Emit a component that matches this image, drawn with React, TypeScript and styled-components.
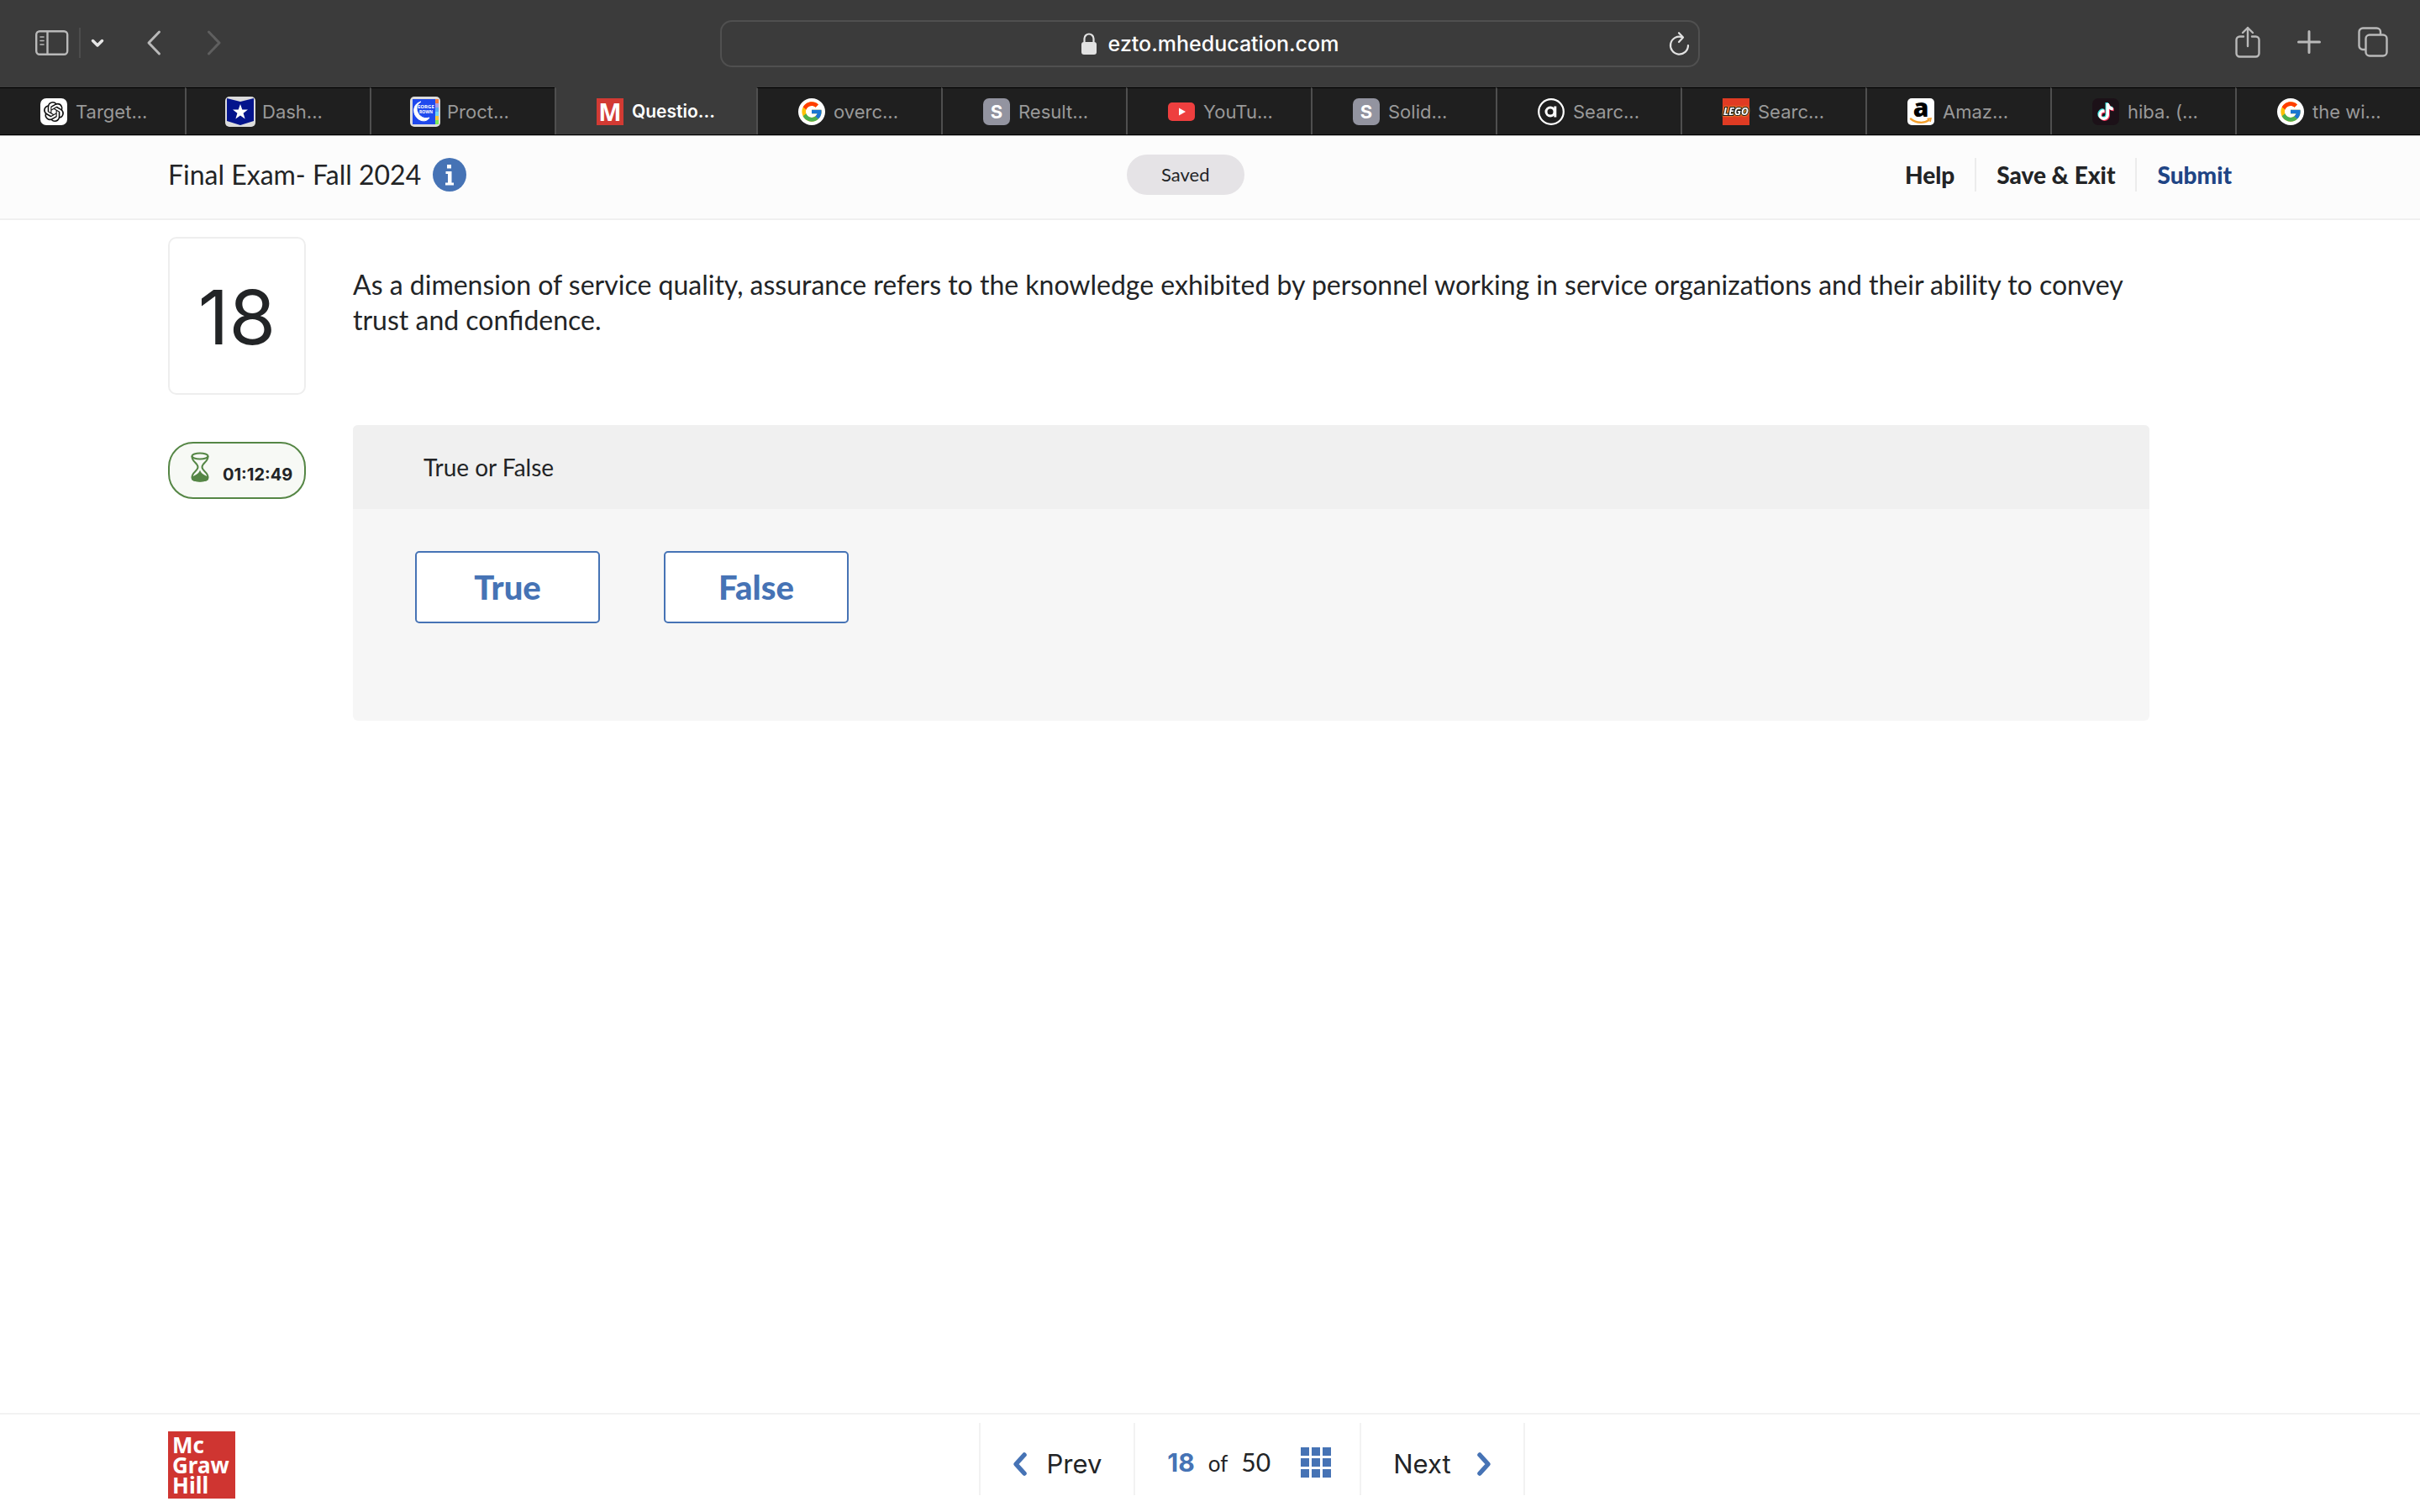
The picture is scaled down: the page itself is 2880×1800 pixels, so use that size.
import React from "react";
import styled, { createGlobalStyle } from "styled-components";
import { FcGoogle } from "react-icons/fc";
import { SiOpenai } from "react-icons/si";
import { FaTiktok } from "react-icons/fa6";

const ui = `Inter, "Liberation Sans", sans-serif`;
const body = `Lato, "Open Sans", sans-serif`;
const humanist = `"Noto Sans", "Open Sans", sans-serif`;
const blue = "#4673b5";
const ink = "#222426";

const GlobalStyle = createGlobalStyle`
  *, *::before, *::after { box-sizing: border-box; }
  body { margin: 0; background: #fff; color: ${ink}; font-family: ${body}; }
  button { font: inherit; color: inherit; background: none; border: 0; padding: 0; cursor: pointer; }
  svg { display: block; flex: none; overflow: visible; }
  h1, h2, p { margin: 0; font-weight: 400; }
`;

const Screen = styled.div`
  display: flex;
  flex-direction: column;
  min-height: 100vh;
`;

/* ---------- browser chrome ---------- */

const Toolbar = styled.div`
  display: grid;
  grid-template-columns: minmax(0, 1fr) 40.5% minmax(0, 1fr);
  align-items: center;
  height: 104px;
  background: #3b3b3b;
`;

const ToolGroup = styled.div<{ $end?: boolean }>`
  display: flex;
  align-items: center;
  justify-content: ${(p) => (p.$end ? "flex-end" : "flex-start")};
  gap: ${(p) => (p.$end ? "44px" : "12px")};
  padding: ${(p) => (p.$end ? "0 38px 4px 0" : "0 0 2px 42px")};
`;

const NavArrows = styled.div`
  display: flex;
  gap: 54px;
  margin-left: 38px;
`;

const ToolButton = styled.button<{ $tone?: string }>`
  display: block;
  color: ${(p) => p.$tone ?? "#b9b9b9"};
`;

const ToolDivider = styled.span`
  width: 2px;
  height: 36px;
  background: #4d4d4d;
`;

const Address = styled.div`
  display: grid;
  grid-template-columns: 24px 1fr 24px;
  align-items: center;
  height: 56px;
  padding: 0 10px;
  border: 2px solid #505050;
  border-radius: 14px;
`;

const Site = styled.div`
  display: flex;
  align-items: center;
  justify-content: center;
  gap: 14px;
  color: #fff;
  font: 500 25px/32px ${ui};
`;

const TabBar = styled.div`
  display: grid;
  grid-template-columns: repeat(3, minmax(0, 11fr)) minmax(0, 12fr) repeat(9, minmax(0, 11fr));
  height: 57px;
  background: #1f1f1f;
  border-bottom: 1px solid #000;
`;

const Tab = styled.button<{ $active?: boolean }>`
  display: flex;
  align-items: center;
  gap: 8px;
  padding-left: 46px;
  border-top: 1px solid ${(p) => (p.$active ? "#3b3b3b" : "#000")};
  border-left: 2px solid #4f4f4f;
  background: ${(p) => (p.$active ? "#3b3b3b" : "transparent")};
  color: ${(p) => (p.$active ? "#fff" : "#999")};
  font: ${(p) => (p.$active ? "600 21px" : "400 22px")}/28px ${ui};
  white-space: nowrap;
  &:first-child { border-left: 0; }
`;

const IconSlot = styled.span`
  display: flex;
  justify-content: center;
  align-items: center;
  flex: none;
  width: 36px;
  height: 36px;
`;

const Favicon = styled.span<{ $bg: string; $radius?: number; $size?: number }>`
  display: flex;
  align-items: center;
  justify-content: center;
  width: ${(p) => p.$size ?? 32}px;
  height: ${(p) => p.$size ?? 32}px;
  border-radius: ${(p) => p.$radius ?? 0}px;
  background: ${(p) => p.$bg};
  color: #fff;
`;

const Glyph = styled.span<{ $size: number; $family?: string }>`
  font: 700 ${(p) => p.$size}px/32px ${(p) => p.$family ?? ui};
`;

const SealText = styled.text`
  fill: #fff;
  font-family: ${humanist};
  font-weight: 700;
`;

const AmazonLetter = styled.text`
  fill: #000;
  font: 800 30px "Open Sans", sans-serif;
`;

const LegoText = styled.text`
  fill: #fff;
  stroke: #1a1a1a;
  stroke-width: 2px;
  paint-order: stroke;
  font: italic 700 12px "Open Sans", sans-serif;
  filter: drop-shadow(0 0 1px #f7d02c);
`;

/* ---------- exam header ---------- */

const ExamHeader = styled.header`
  display: grid;
  grid-template-columns: 39fr auto 41fr;
  align-items: center;
  height: 101px;
  padding: 0 200px 6px;
  background: #fcfcfc;
  border-top: 1px solid #bdbdbd;
  border-bottom: 2px solid #f0f0f0;
`;

const TitleGroup = styled.div`
  display: flex;
  align-items: center;
  gap: 14px;
`;

const Title = styled.h1`
  font-size: 32px;
  line-height: 40px;
`;

const Saved = styled.span`
  width: 140px;
  border-radius: 24px;
  background: #e5e3e6;
  text-align: center;
  font-size: 22px;
  line-height: 48px;
`;

const Actions = styled.nav`
  display: flex;
  justify-content: flex-end;
`;

const Action = styled.button<{ $primary?: boolean }>`
  padding: 0 24px;
  border-left: 2px solid #ececec;
  color: ${(p) => (p.$primary ? "#1f4585" : ink)};
  font-size: 28px;
  font-weight: 900;
  line-height: 40px;
  &:first-child { border-left: 0; }
`;

/* ---------- question ---------- */

const Main = styled.main`
  display: grid;
  grid-template-columns: 164px minmax(0, 1fr);
  column-gap: 56px;
  row-gap: 36px;
  align-items: start;
  align-content: start;
  flex: 1;
  padding: 20px 322px 40px 200px;
`;

const NumberCard = styled.div`
  padding-top: 4px;
  border: 2px solid #eee;
  border-radius: 10px;
  text-align: center;
  font: 400 90px/180px ${ui};
`;

const Question = styled.p`
  padding-top: 36px;
  font-size: 32px;
  line-height: 42px;
`;

const Timer = styled.div`
  display: flex;
  gap: 16px;
  height: 68px;
  margin-top: 20px;
  padding: 10px 0 0 25px;
  border: 2px solid #558645;
  border-radius: 30px;
  background: #f7f9f5;
  font: 700 20px/54px ${ui};
`;

const Panel = styled.section`
  overflow: hidden;
  border-radius: 6px;
  background: #f6f6f6;
`;

const PanelTitle = styled.h2`
  padding: 30px 84px;
  background: #f0f0f0;
  font-size: 28px;
  line-height: 40px;
`;

const Choices = styled.div`
  display: flex;
  gap: 76px;
  padding: 50px 74px 116px;
`;

const Choice = styled.button`
  width: 220px;
  border: 2px solid ${blue};
  border-radius: 5px;
  background: #fff;
  color: ${blue};
  font-size: 40px;
  font-weight: 900;
  line-height: 82px;
`;

/* ---------- footer ---------- */

const Footer = styled.footer`
  display: grid;
  grid-template-columns: 965fr auto 865fr;
  height: 118px;
  padding: 10px 200px 0;
  border-top: 2px solid #f2f2f2;
`;

const Logo = styled.div`
  width: 80px;
  height: 80px;
  margin-top: 10px;
  padding: 4px 0 0 5px;
  background: #cf3531;
  color: #fff;
  font: 700 26px/24px ${humanist};
`;

const Pager = styled.nav`
  display: flex;
  height: 86px;
  border-right: 2px solid #f2f2f2;
`;

const PagerCell = styled.div`
  display: flex;
  align-items: center;
  padding-top: 8px;
  border-left: 2px solid #f2f2f2;
  font-size: 30px;
  line-height: 40px;
`;

const StepButton = styled.button<{ $gap: number }>`
  display: flex;
  align-items: center;
  gap: ${(p) => p.$gap}px;
  padding: 4px 38px 0;
  font: 400 31px/40px ${ui};
`;

const Position = styled.div`
  display: flex;
  align-items: baseline;
  gap: 16px;
  padding: 0 36px 0 38px;
`;

const Current = styled.strong`
  color: ${blue};
  font: 700 30px/40px ${ui};
`;

const Of = styled.span`
  font-size: 26px;
`;

const GridButton = styled.button`
  margin-right: 34px;
`;

const Stroke = ({ w, h, d, sw = 3 }: { w: number; h: number; d: string; sw?: number }) => (
  <svg width={w} height={h} viewBox={`0 0 ${w} ${h}`} fill="none" stroke="currentColor" strokeWidth={sw} strokeLinecap="round" strokeLinejoin="round">
    <path d={d} />
  </svg>
);

const Arrow = ({ d }: { d: string }) => (
  <svg width="18" height="28" viewBox="0 0 18 28" fill="none" stroke={blue} strokeWidth="5.5" strokeLinecap="round" strokeLinejoin="round">
    <path d={d} />
  </svg>
);

const Google = () => (
  <Favicon $bg="#fff" $radius={16}><FcGoogle size={28} /></Favicon>
);

const Letter = () => (
  <Favicon $bg="#9394a0" $radius={7}><Glyph $size={22}>S</Glyph></Favicon>
);

const Dash = () => (
  <Favicon $bg="#dcdcdc" $radius={5} $size={36}>
    <svg width="36" height="36" viewBox="0 0 36 36">
      <path d="M2 2L18 6L34 2V29L18 34L2 29Z" fill="#04148c" />
      <path d="M18 9L20.3 15.5H27L21.6 19.7L23.6 26.5L18 22.4L12.4 26.5L14.4 19.7L9 15.5H15.7Z" fill="#fff" />
    </svg>
  </Favicon>
);

const George = () => (
  <Favicon $bg="#dcdcdc" $radius={5} $size={36}>
    <svg width="36" height="36" viewBox="0 0 36 36">
      <rect x="3" y="3" width="27" height="30" fill="#1f49ee" />
      {["#f47b3c", "#a79be8", "#5aa7f2", "#6fd0f5", "#f5c63c", "#7bea5a"].map((c, i) => (
        <rect key={c} x="30" y={3 + i * 5} width="4" height="5" fill={c} />
      ))}
      <path d="M13 6C5 8 3 16 6 22C10 30 20 31 23 25C15 28 8 21 8 14C8 10 10 8 13 6Z" fill="#fff" stroke="#fff" />
      <SealText x="9" y="14" fontSize="6">EORGE</SealText>
      <SealText x="11" y="20" fontSize="5">ROWN</SealText>
    </svg>
  </Favicon>
);

const YouTube = () => (
  <svg width="32" height="22" viewBox="0 0 32 22">
    <rect width="32" height="22" rx="5" fill="#ee3f3f" />
    <path d="M13 6.5L21 11L13 15.5Z" fill="#fff" />
  </svg>
);

const Ask = () => (
  <svg width="32" height="32" viewBox="0 0 32 32" fill="none" stroke="#fff">
    <circle cx="16" cy="16" r="14.8" strokeWidth="2.2" />
    <circle cx="15" cy="16" r="5" strokeWidth="3" />
    <path d="M20.8 9.5V22.5" strokeWidth="3" />
  </svg>
);

const Lego = () => (
  <svg width="32" height="32" viewBox="0 0 32 32">
    <rect width="32" height="32" fill="#df3b23" />
    <LegoText x="16" y="20" textAnchor="middle">LEGO</LegoText>
  </svg>
);

const Amazon = () => (
  <Favicon $bg="#fff" $radius={5}>
    <svg width="32" height="32" viewBox="0 0 32 32">
      <AmazonLetter x="16" y="22" textAnchor="middle">a</AmazonLetter>
      <path d="M4 24.5C11 30 20 30 25.5 26" fill="none" stroke="#f5a02c" strokeWidth="2.4" strokeLinecap="round" />
      <path d="M23.5 24.5L28 24L27 28" fill="none" stroke="#f5a02c" strokeWidth="1.6" />
    </svg>
  </Favicon>
);

const TikTok = () => (
  <Favicon $bg="#1c1118" $radius={7}>
    <svg width="24" height="24" viewBox="0 0 24 24">
      <FaTiktok x={1} y={1} size={20} color="#35e6e0" />
      <FaTiktok x={3} y={3} size={20} color="#f5335a" />
      <FaTiktok x={2} y={2} size={20} color="#fff" />
    </svg>
  </Favicon>
);

const tabs: { label: string; icon: React.ReactNode; active?: boolean }[] = [
  { label: "Target...", icon: <Favicon $bg="#fff" $radius={7}><SiOpenai size={24} color="#111" /></Favicon> },
  { label: "Dash...", icon: <Dash /> },
  { label: "Proct...", icon: <George /> },
  { label: "Questio...", icon: <Favicon $bg="#d23a33"><Glyph $size={29} $family={humanist}>M</Glyph></Favicon>, active: true },
  { label: "overc...", icon: <Google /> },
  { label: "Result...", icon: <Letter /> },
  { label: "YouTu...", icon: <YouTube /> },
  { label: "Solid...", icon: <Letter /> },
  { label: "Searc...", icon: <Ask /> },
  { label: "Searc...", icon: <Lego /> },
  { label: "Amaz...", icon: <Amazon /> },
  { label: "hiba. (...", icon: <TikTok /> },
  { label: "the wi...", icon: <Google /> },
];

export default function App() {
  return (
    <Screen>
      <GlobalStyle />
      <Toolbar>
        <ToolGroup>
          <ToolButton aria-label="Sidebar">
            <svg width="40" height="30" viewBox="0 0 40 30" fill="none" stroke="currentColor" strokeWidth="2.4" strokeLinecap="round">
              <rect x="1.2" y="1.2" width="37" height="27.6" rx="4" />
              <path d="M14.5 1.5V28.5" />
              <path d="M6 8H10M6 12.5H10M6 17H10" strokeWidth="1.6" />
            </svg>
          </ToolButton>
          <ToolDivider />
          <ToolButton aria-label="Tab groups" $tone="#e6e6e6"><Stroke w={16} h={12} sw={3.5} d="M2.5 3.5L8 9L13.5 3.5" /></ToolButton>
          <NavArrows>
            <ToolButton aria-label="Back"><Stroke w={18} h={30} d="M15.5 2L3 15L15.5 28" /></ToolButton>
            <ToolButton aria-label="Forward" $tone="#5f5f5f"><Stroke w={18} h={30} d="M2.5 2L15 15L2.5 28" /></ToolButton>
          </NavArrows>
        </ToolGroup>
        <Address>
          <span />
          <Site>
            <svg width="18" height="26" viewBox="0 0 18 26">
              <path d="M3.5 12V7A5.5 5.5 0 0 1 14.5 7V12" fill="none" stroke="#e2e2e2" strokeWidth="2.2" />
              <rect y="11" width="18" height="15" rx="3" fill="#e2e2e2" />
            </svg>
            ezto.mheducation.com
          </Site>
          <ToolButton aria-label="Reload" $tone="#e2e2e2">
            <svg width="24" height="28" viewBox="0 0 24 28" fill="none" stroke="currentColor" strokeWidth="2.2" strokeLinecap="round" strokeLinejoin="round">
              <path d="M15 6.2A10.5 10.5 0 1 0 22 16" />
              <path d="M11 1.2L16 6.5L11 12" />
            </svg>
          </ToolButton>
        </Address>
        <ToolGroup $end>
          <ToolButton aria-label="Share">
            <svg width="30" height="38" viewBox="0 0 30 38" fill="none" stroke="currentColor" strokeWidth="2.4" strokeLinecap="round" strokeLinejoin="round">
              <path d="M10 12.5H5.5A4 4 0 0 0 1.5 16.5V32.5A4 4 0 0 0 5.5 36.5H24.5A4 4 0 0 0 28.5 32.5V16.5A4 4 0 0 0 24.5 12.5H20" />
              <path d="M15 24V2M9 8L15 2L21 8" />
            </svg>
          </ToolButton>
          <ToolButton aria-label="New tab"><Stroke w={28} h={28} d="M14 1.5V26.5M1.5 14H26.5" /></ToolButton>
          <ToolButton aria-label="All tabs">
            <svg width="36" height="36" viewBox="0 0 36 36" fill="none" stroke="currentColor" strokeWidth="2.4">
              <rect x="9.5" y="9.5" width="25" height="25" rx="4.5" />
              <path d="M9.5 27H6A4.5 4.5 0 0 1 1.5 22.5V6A4.5 4.5 0 0 1 6 1.5H22.5A4.5 4.5 0 0 1 27 6V9.5" />
            </svg>
          </ToolButton>
        </ToolGroup>
      </Toolbar>
      <TabBar>
        {tabs.map((t, i) => (
          <Tab key={i} $active={t.active}>
            <IconSlot>{t.icon}</IconSlot>
            {t.label}
          </Tab>
        ))}
      </TabBar>

      <ExamHeader>
        <TitleGroup>
          <Title>Final Exam- Fall 2024</Title>
          <ToolButton aria-label="Exam information">
            <svg width="40" height="40" viewBox="0 0 40 40">
              <circle cx="20" cy="20" r="20" fill={blue} />
              <path d="M17 8H22V12.5H17ZM15.5 16H22.5V29.5H25V32.5H15V29.5H18V19H15.5Z" fill="#fff" />
            </svg>
          </ToolButton>
        </TitleGroup>
        <Saved>Saved</Saved>
        <Actions>
          <Action>Help</Action>
          <Action>Save &amp; Exit</Action>
          <Action $primary>Submit</Action>
        </Actions>
      </ExamHeader>

      <Main>
        <NumberCard>18</NumberCard>
        <Question>
          As a dimension of service quality, assurance refers to the knowledge exhibited by personnel working in service
          organizations and their ability to convey trust and confidence.
        </Question>
        <Timer>
          <svg width="22" height="36" viewBox="0 0 22 36" fill="none" stroke="#558645" strokeWidth="2">
            <ellipse cx="11" cy="5" rx="9.5" ry="3.5" />
            <path d="M1.5 5C1 12 8.5 13 8.5 18S1 24 1.5 31C2 36 20 36 20.5 31C21 24 13.5 23 13.5 18S21 12 20.5 5" />
            <path d="M2.5 30C5 29 9 28 11 24C13 28 17 29 19.5 30V33C16 35 6 35 2.5 33Z" fill="#558645" />
          </svg>
          01:12:49
        </Timer>
        <Panel>
          <PanelTitle>True or False</PanelTitle>
          <Choices>
            <Choice>True</Choice>
            <Choice>False</Choice>
          </Choices>
        </Panel>
      </Main>

      <Footer>
        <Logo>Mc<br />Graw<br />Hill</Logo>
        <Pager>
          <PagerCell>
            <StepButton $gap={22}>
              <Arrow d="M14 3L4 14L14 25" />
              Prev
            </StepButton>
          </PagerCell>
          <PagerCell>
            <Position><Current>18</Current><Of>of</Of><span>50</span></Position>
            <GridButton aria-label="Question list">
              <svg width="36" height="36" viewBox="0 0 36 36" fill={blue}>
                {[0, 13, 26].map((y) => [0, 13, 26].map((x) => <rect key={`${x}-${y}`} x={x} y={y} width="10" height="10" />))}
              </svg>
            </GridButton>
          </PagerCell>
          <PagerCell>
            <StepButton $gap={30}>
              Next
              <Arrow d="M4 3L14 14L4 25" />
            </StepButton>
          </PagerCell>
        </Pager>
      </Footer>
    </Screen>
  );
}
